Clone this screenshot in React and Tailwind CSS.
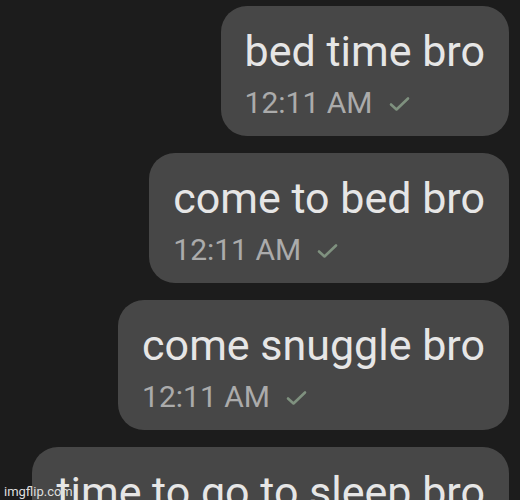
import React from "react";

const messages = [
  "bed time bro",
  "come to bed bro",
  "come snuggle bro",
  "time to go to sleep bro",
];

const Check = () => (
  <svg width="22" height="16" viewBox="0 0 22 16" fill="none" className="ml-4 mt-[2px]">
    <path d="M2 8.5 L7.5 13.5 L19 2.5" stroke="#7f917f" strokeWidth="2.6" strokeLinecap="round" strokeLinejoin="round" />
  </svg>
);

const Bubble = ({ text }) => (
  <div className="bg-[#474747] rounded-[26px] pl-6 pr-6 pt-[20px] pb-[16px] shrink-0">
    <div className="text-[43px] leading-[50px] text-[#e6e6e6] whitespace-nowrap">{text}</div>
    <div className="flex items-center mt-[10px] h-[34px]">
      <span className="text-[30px] leading-[34px] text-[#ababab]">12:11 AM</span>
      <Check />
    </div>
  </div>
);

export default function App() {
  return (
    <div
      className="relative w-[520px] h-[500px] overflow-hidden bg-[#1c1c1c] flex flex-col items-end gap-[17px] pt-[6px] pr-[11px]"
      style={{ fontFamily: "Roboto, 'Liberation Sans', sans-serif" }}
    >
      {messages.map((m) => (
        <Bubble key={m} text={m} />
      ))}
      <span className="absolute left-[4px] bottom-[2px] text-[13px] leading-none text-[#dedede]">
        imgflip.com
      </span>
    </div>
  );
}
